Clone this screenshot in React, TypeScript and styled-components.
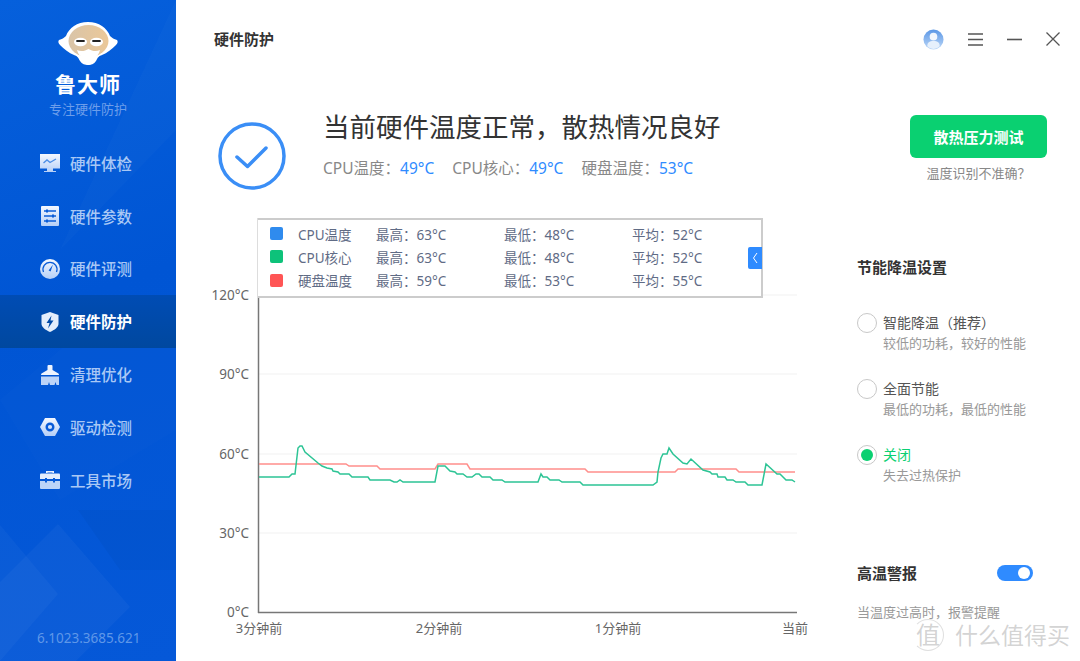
import styled, { createGlobalStyle } from 'styled-components'

const GlobalStyle = createGlobalStyle`
  html, body {
    margin: 0;
    padding: 0;
    background: #fff;
  }
  body {
    font-family: "Noto Sans", "Noto Sans CJK SC", sans-serif;
  }
`

const Window = styled.div`
  position: relative;
  display: flex;
  width: 1080px;
  height: 661px;
  overflow: hidden;
  background: #fff;
`

const Sidebar = styled.aside`
  position: relative;
  display: flex;
  flex-direction: column;
  flex: 0 0 176px;
  height: 661px;
  background: linear-gradient(160deg, #0660dc 0%, #0055d4 45%, #0558d8 100%);
  overflow: hidden;
`

const SidebarPattern = styled.svg`
  position: absolute;
  left: 0;
  top: 0;
`

const Brand = styled.div`
  position: relative;
  display: flex;
  flex-direction: column;
  align-items: center;
  height: 137px;
  padding-top: 21px;
  box-sizing: border-box;
`

const BrandName = styled.div`
  margin-top: 3px;
  font-size: 21px;
  line-height: 30px;
  font-weight: 700;
  letter-spacing: 1px;
  color: #fff;
`

const BrandSlogan = styled.div`
  margin-top: 1px;
  font-size: 13px;
  line-height: 18px;
  color: #6d9eea;
`

const NavList = styled.nav`
  position: relative;
  display: flex;
  flex-direction: column;
`

const NavItem = styled.div<{ $active?: boolean }>`
  display: flex;
  align-items: center;
  gap: 10px;
  height: 52.8px;
  padding-left: 40px;
  font-size: 15.5px;
  font-weight: ${(p) => (p.$active ? 700 : 500)};
  color: ${(p) => (p.$active ? '#fff' : '#a9c8f5')};
  background: ${(p) => (p.$active ? 'linear-gradient(180deg, #004cb4, #00489f)' : 'transparent')};
`

const Version = styled.div`
  position: absolute;
  left: 37px;
  bottom: 13px;
  font-size: 13.5px;
  line-height: 20px;
  color: #5f97e8;
`

const Main = styled.main`
  flex: 1;
  display: flex;
  flex-direction: column;
  min-width: 0;
`

const TopBar = styled.header`
  display: flex;
  align-items: center;
  justify-content: space-between;
  height: 78px;
  padding: 0 20px 0 38px;
  box-sizing: border-box;
`

const PageTitle = styled.h1`
  margin: 0;
  font-size: 15px;
  line-height: 20px;
  font-weight: 700;
  color: #333;
`

const WindowTools = styled.div`
  display: flex;
  align-items: center;
  gap: 24px;
`

const StatusRow = styled.section`
  display: flex;
  align-items: flex-start;
  height: 140px;
  padding: 44px 33px 0 42px;
  box-sizing: border-box;
`

const StatusText = styled.div`
  flex: 1;
  margin-left: 37px;
  margin-top: -14px;
`

const StatusTitle = styled.div`
  font-size: 26.5px;
  line-height: 38px;
  color: #333;
`

const StatusTemps = styled.div`
  display: flex;
  gap: 18px;
  margin-top: 10px;
  font-size: 15.5px;
  line-height: 24px;
  color: #888;
`

const TempValue = styled.span`
  color: #2f8bff;
`

const ActionColumn = styled.div`
  display: flex;
  flex-direction: column;
  align-items: center;
  margin-top: -7px;
`

const PrimaryButton = styled.button`
  width: 137px;
  height: 43px;
  border: 0;
  border-radius: 6px;
  background: #0ad071;
  color: #fff;
  font-family: inherit;
  font-size: 15px;
  font-weight: 700;
`

const HelpLink = styled.div`
  margin-top: 6px;
  font-size: 13px;
  line-height: 18px;
  color: #888;
`

const Body = styled.div`
  display: flex;
  flex: 1;
  min-height: 0;
`

const ChartArea = styled.section`
  position: relative;
  flex: 0 0 681px;
`

const ChartLegend = styled.div`
  position: absolute;
  left: 82px;
  top: 0;
  width: 505px;
  height: 80px;
  padding: 2px 0 0 12px;
  box-sizing: border-box;
  border: 2px solid #ccc;
  border-left: 0;
  background: #fff;
`

const LegendRow = styled.div`
  display: grid;
  grid-template-columns: 28px 78px 128px 128px 100px;
  align-items: center;
  height: 23.3px;
  font-size: 13.5px;
  color: #5f6b85;
`

const Swatch = styled.i<{ $color: string }>`
  display: block;
  width: 13px;
  height: 13px;
  border-radius: 2px;
  background: ${(p) => p.$color};
`

const LegendToggle = styled.div`
  position: absolute;
  right: -1px;
  top: 27px;
  display: flex;
  align-items: center;
  justify-content: center;
  width: 14px;
  height: 22px;
  border-radius: 2px 0 0 2px;
  background: #2f8bff;
`

const SettingsPanel = styled.aside`
  flex: 1;
  display: flex;
  flex-direction: column;
  padding-top: 39px;
`

const SectionTitle = styled.div`
  font-size: 15px;
  line-height: 20px;
  font-weight: 700;
  color: #333;
`

const OptionList = styled.div`
  display: flex;
  flex-direction: column;
  gap: 24px;
  margin-top: 36px;
`

const OptionRow = styled.div`
  display: flex;
  align-items: flex-start;
  gap: 6px;
  height: 42px;
`

const Radio = styled.span<{ $checked?: boolean }>`
  display: flex;
  align-items: center;
  justify-content: center;
  width: 20px;
  height: 20px;
  box-sizing: border-box;
  border: 1px solid #c8c8c8;
  border-radius: 50%;
  &::after {
    content: '';
    display: ${(p) => (p.$checked ? 'block' : 'none')};
    width: 12px;
    height: 12px;
    border-radius: 50%;
    background: #0ad071;
  }
`

const OptionLabel = styled.div<{ $checked?: boolean }>`
  font-size: 14px;
  line-height: 20px;
  color: ${(p) => (p.$checked ? '#0ad071' : '#555')};
`

const OptionHint = styled.div`
  font-size: 13px;
  line-height: 20px;
  color: #999;
`

const AlarmRow = styled.div`
  display: flex;
  align-items: center;
  justify-content: space-between;
  width: 176px;
  margin-top: 76px;
`

const Toggle = styled.span`
  display: flex;
  align-items: center;
  justify-content: flex-end;
  width: 36px;
  height: 16px;
  padding-right: 3px;
  box-sizing: border-box;
  border-radius: 8px;
  background: #2f8bff;
  &::after {
    content: '';
    width: 12px;
    height: 12px;
    border-radius: 50%;
    background: #fff;
  }
`

const AlarmHint = styled(OptionHint)`
  margin-top: 19px;
`

const Watermark = styled.div`
  position: absolute;
  right: 10px;
  bottom: 10px;
  display: flex;
  align-items: center;
  gap: 11px;
  font-size: 23px;
  line-height: 30px;
  color: rgba(150, 150, 150, 0.42);
`

const WatermarkBadge = styled.span`
  display: flex;
  align-items: center;
  justify-content: center;
  width: 30px;
  height: 30px;
  border: 1px solid rgba(150, 150, 150, 0.3);
  border-left-color: transparent;
  border-radius: 50%;
  font-size: 24px;
`

// 全角标点
const COLON = '\uFF1A'

const navItems = [
  { label: '硬件体检', icon: 'monitor' },
  { label: '硬件参数', icon: 'sliders' },
  { label: '硬件评测', icon: 'gauge' },
  { label: '硬件防护', icon: 'shield', active: true },
  { label: '清理优化', icon: 'brush' },
  { label: '驱动检测', icon: 'nut' },
  { label: '工具市场', icon: 'toolbox' },
]

const legend = [
  { name: 'CPU温度', color: '#2f8bee', max: 63, min: 48, avg: 52 },
  { name: 'CPU核心', color: '#0dc27a', max: 63, min: 48, avg: 52 },
  { name: '硬盘温度', color: '#ff5555', max: 59, min: 53, avg: 55 },
]

const temps = [
  { label: 'CPU温度', value: '49°C' },
  { label: 'CPU核心', value: '49°C' },
  { label: '硬盘温度', value: '53°C' },
]

const options = [
  { label: '智能降温\uFF08推荐\uFF09', hint: '较低的功耗\uFF0C较好的性能' },
  { label: '全面节能', hint: '最低的功耗\uFF0C最低的性能' },
  { label: '关闭', hint: '失去过热保护', checked: true },
]

// 折线坐标,相对截图取点
const greenLine =
  '259,477 289,477 292,474 295,474 298,448 300,446 302,446 305,452 318,463 322,466 327,468 332,469 333,471 338,472 340,474 349,474 352,477 368,477 370,480 390,480 394,482 397,482 400,480 403,482 435,482 438,466 445,466 450,471 455,472 457,474 463,474 467,477 472,477 476,474 479,474 482,477 490,477 493,480 502,480 505,482 538,482 541,474 543,477 547,477 550,480 559,480 562,482 580,482 583,485 653,485 657,482 658,472 661,458 663,454 667,454 669,448 673,454 683,463 687,464 691,459 703,470 710,472 712,474 717,474 718,477 725,477 727,480 733,480 736,482 745,482 748,485 762,485 766,464 777,474 780,474 786,480 792,480 795,482'
const redLine =
  '259,464 346,464 349,466 377,466 380,469 435,469 438,464 467,464 470,469 585,469 588,472 675,472 678,469 736,469 739,472 795,472'

const yTicks = [
  { label: '120°C', y: 295 },
  { label: '90°C', y: 374 },
  { label: '60°C', y: 454 },
  { label: '30°C', y: 533 },
  { label: '0°C', y: 612 },
]

const xTicks = [
  { label: '3分钟前', x: 259 },
  { label: '2分钟前', x: 439 },
  { label: '1分钟前', x: 618 },
  { label: '当前', x: 795 },
]

function NavIcon({ name }: { name: string }) {
  const fill = 'url(#navIconFill)'
  const bg = name === 'shield' ? '#004aa8' : '#0a5cd8'
  return (
    <svg width="20" height="20" viewBox="0 0 20 20">
      {name === 'monitor' && (
        <>
          <path d="M0 1h20v14.500H0zM7 15.500h6V18h3v1H4v-1h3z" fill={fill} />
          <path d="M3.500 10l3.500-3 3 2.500L16 6" fill="none" stroke="#4d8ee6" strokeWidth="1.400" />
        </>
      )}
      {name === 'sliders' && (
        <>
          <rect x="1" y="0" width="18" height="20" rx="1" fill={fill} />
          <path d="M4 5h12M4 10h12M4 15h12" stroke={bg} strokeWidth="1.300" />
          <path d="M7 3.500v3M13 8.500v3M7 13.500v3" stroke={bg} strokeWidth="2" />
        </>
      )}
      {name === 'gauge' && (
        <>
          <circle cx="10" cy="10" r="10" fill={fill} />
          <path d="M3.500 13a7 7 0 1 1 13 0" fill="none" stroke={bg} strokeWidth="1.300" />
          <path d="M8.600 11.500L13 5.500l-2.400 7z" fill={bg} />
        </>
      )}
      {name === 'shield' && (
        <>
          <path d="M10 0l8.500 3v9c0 3-4 6-8.500 8C5.500 18 1.500 15 1.500 12V3z" fill="#e4eefc" />
          <path d="M11.500 3.500L6.500 11h3l-1.500 5.500 5.500-8h-3z" fill={bg} />
        </>
      )}
      {name === 'brush' && (
        <>
          <path d="M8.500 0h3q1 0 1 1v4l6 3.500q.5.500.5 1.500H1q0-1 .5-1.500l6-3.500V1q0-1 1-1z" fill="#eef4fe" />
          <path d="M1 11.500h18V20h-2.500l-1-3-1 3H10l-1-3-1 3H1z" fill="#bcd4f8" />
        </>
      )}
      {name === 'nut' && (
        <>
          <path d="M5 1h10l5 9-5 9H5L0 10z" fill={fill} />
          <circle cx="10" cy="10" r="3.300" fill="none" stroke={bg} strokeWidth="2.400" />
        </>
      )}
      {name === 'toolbox' && (
        <>
          <path d="M6 3V1h8v2h-1.500V2.500h-5V3z" fill="#eaf2fe" />
          <path d="M1 3.500h18q1 0 1 1V9H0V4.500q0-1 1-1z" fill="#e4eefc" />
          <path d="M0 11h20v7q0 1-1 1H1q-1 0-1-1z" fill="#bcd4f8" />
          <path d="M5 8h2v4.500H5zM13 8h2v4.500h-2z" fill={bg} />
        </>
      )}
    </svg>
  )
}

function Logo() {
  return (
    <svg width="60" height="45" viewBox="0 0 60 45">
      <defs>
        <linearGradient id="logoHead" x1="0" y1="0" x2="1" y2="0">
          <stop offset="0" stopColor="#d9c4a8" />
          <stop offset="1" stopColor="#ebc898" />
        </linearGradient>
      </defs>
      <path
        d="M30 1C41 1 49 7 52 15c2 2 4 3 7 4 1 1 1 3-1 5-4 4-9 8-14 10-3 1-4 2-6 6-2 3-5 4-8 4s-6-1-8-4c-2-4-3-5-6-6-5-2-10-6-14-10-2-2-2-4-1-5 3-1 5-2 7-4C11 7 19 1 30 1z"
        fill="#fff"
      />
      <ellipse cx="30.500" cy="20" rx="20" ry="16" fill="url(#logoHead)" />
      <path
        d="M19 29c4 2 8 1 11.500-1 3.500 2 7.500 3 11.500 1-1 4-3 6-5 7-1 5-4 8-6.500 8s-5.500-3-6.500-8c-2-1-4-3-5-7z"
        fill="#fff"
      />
      <ellipse cx="22.500" cy="21" rx="6.500" ry="4.200" fill="#fff" />
      <ellipse cx="38.500" cy="21" rx="6.500" ry="4.200" fill="#fff" />
      <path d="M19 20h7M35 20h7" stroke="#222" strokeWidth="1.800" strokeLinecap="round" />
    </svg>
  )
}

function TemperatureChart() {
  // svg 坐标原点 = 页面 (176, 218)
  return (
    <svg width="681" height="425" viewBox="176 218 681 425">
      {yTicks.slice(0, -1).map((t) => (
        <line key={t.y} x1="259" x2="797" y1={t.y} y2={t.y} stroke="#f1f1f1" strokeWidth="1" />
      ))}
      <line x1="258.500" x2="258.500" y1="218" y2="613" stroke="#777" strokeWidth="1.500" />
      <line x1="258" x2="797" y1="612.500" y2="612.500" stroke="#777" strokeWidth="1.500" />
      {yTicks.map((t) => (
        <text key={t.label} x="249" y={t.y + 5} textAnchor="end" fontSize="13.500" fill="#666">
          {t.label}
        </text>
      ))}
      {xTicks.map((t) => (
        <text key={t.label} x={t.x} y="633" textAnchor="middle" fontSize="13" fill="#666">
          {t.label}
        </text>
      ))}
      <polyline points={redLine} fill="none" stroke="#ff8f8c" strokeWidth="1.500" />
      <polyline points={greenLine} fill="none" stroke="#2dc495" strokeWidth="1.500" />
    </svg>
  )
}

export default function App() {
  return (
    <>
      <GlobalStyle />
      <Window>
        <Sidebar>
          <SidebarPattern width="176" height="661" viewBox="0 0 176 661">
            <defs>
              <linearGradient id="navIconFill" x1="0" y1="0" x2="0" y2="1">
                <stop offset="0" stopColor="#f4f8ff" />
                <stop offset="1" stopColor="#b5cff7" />
              </linearGradient>
            </defs>
            <path d="M58 524L130 607 76 661H0V582z" fill="#ffffff" fillOpacity="0.035" />
            <path d="M0 525L58 594 0 661z" fill="#ffffff" fillOpacity="0.03" />
            <path d="M78 510h98v60l-56 0z" fill="#000000" fillOpacity="0.03" />
            <path d="M176 0v130L60 250z" fill="#ffffff" fillOpacity="0.02" />
            <path d="M0 400L120 300 176 350V430L60 500z" fill="#ffffff" fillOpacity="0.012" />
          </SidebarPattern>
          <Brand>
            <Logo />
            <BrandName>鲁大师</BrandName>
            <BrandSlogan>专注硬件防护</BrandSlogan>
          </Brand>
          <NavList>
            {navItems.map((item) => (
              <NavItem key={item.label} $active={item.active}>
                <NavIcon name={item.icon} />
                {item.label}
              </NavItem>
            ))}
          </NavList>
          <Version>6.1023.3685.621</Version>
        </Sidebar>
        <Main>
          <TopBar>
            <PageTitle>硬件防护</PageTitle>
            <WindowTools>
              <svg width="21" height="21" viewBox="0 0 22 22">
                <defs>
                  <linearGradient id="avatarBg" x1="0" y1="0" x2="0" y2="1">
                    <stop offset="0" stopColor="#5b97e6" />
                    <stop offset="1" stopColor="#bcd7f7" />
                  </linearGradient>
                </defs>
                <circle cx="11" cy="11" r="10.500" fill="url(#avatarBg)" />
                <circle cx="11" cy="8" r="4" fill="#fff" fillOpacity="0.9" />
                <path d="M4.500 18c0-4 2-5.500 6.500-5.500s6.500 1.500 6.500 5.500q-3 3-6.500 3t-6.500-3z" fill="#e6f0fc" />
              </svg>
              <svg width="15" height="13" viewBox="0 0 15 13">
                <path d="M0 1h15M0 6.500h15M0 12h15" stroke="#555" strokeWidth="1.400" />
              </svg>
              <svg width="15" height="13" viewBox="0 0 15 13">
                <path d="M0 6.500h15" stroke="#555" strokeWidth="1.600" />
              </svg>
              <svg width="14" height="14" viewBox="0 0 14 14">
                <path d="M.5.500l13 13M13.500.500l-13 13" stroke="#555" strokeWidth="1.300" />
              </svg>
            </WindowTools>
          </TopBar>
          <StatusRow>
            <svg width="68" height="68" viewBox="0 0 68 68">
              <circle cx="34" cy="34" r="32" fill="none" stroke="#3a8ef6" strokeWidth="3.500" />
              <path
                d="M19 35l10.500 9.500L48 26"
                fill="none"
                stroke="#3a8ef6"
                strokeWidth="3.500"
                strokeLinecap="round"
                strokeLinejoin="round"
              />
            </svg>
            <StatusText>
              <StatusTitle>{'当前硬件温度正常\uFF0C散热情况良好'}</StatusTitle>
              <StatusTemps>
                {temps.map((t) => (
                  <span key={t.label}>
                    {t.label}
                    {COLON}
                    <TempValue>{t.value}</TempValue>
                  </span>
                ))}
              </StatusTemps>
            </StatusText>
            <ActionColumn>
              <PrimaryButton>散热压力测试</PrimaryButton>
              <HelpLink>{'温度识别不准确\uFF1F'}</HelpLink>
            </ActionColumn>
          </StatusRow>
          <Body>
            <ChartArea>
              <TemperatureChart />
              <ChartLegend>
                {legend.map((row) => (
                  <LegendRow key={row.name}>
                    <Swatch $color={row.color} />
                    <span>{row.name}</span>
                    <span>
                      最高{COLON}
                      {row.max}°C
                    </span>
                    <span>
                      最低{COLON}
                      {row.min}°C
                    </span>
                    <span>
                      平均{COLON}
                      {row.avg}°C
                    </span>
                  </LegendRow>
                ))}
                <LegendToggle>
                  <svg width="6" height="12" viewBox="0 0 6 12">
                    <path d="M5 1L1.500 6 5 11" fill="none" stroke="#fff" strokeWidth="1" />
                  </svg>
                </LegendToggle>
              </ChartLegend>
            </ChartArea>
            <SettingsPanel>
              <SectionTitle>节能降温设置</SectionTitle>
              <OptionList>
                {options.map((o) => (
                  <OptionRow key={o.label}>
                    <Radio $checked={o.checked} />
                    <div>
                      <OptionLabel $checked={o.checked}>{o.label}</OptionLabel>
                      <OptionHint>{o.hint}</OptionHint>
                    </div>
                  </OptionRow>
                ))}
              </OptionList>
              <AlarmRow>
                <SectionTitle>高温警报</SectionTitle>
                <Toggle />
              </AlarmRow>
              <AlarmHint>{'当温度过高时\uFF0C报警提醒'}</AlarmHint>
            </SettingsPanel>
          </Body>
        </Main>
        <Watermark>
          <WatermarkBadge>值</WatermarkBadge>
          什么值得买
        </Watermark>
      </Window>
    </>
  )
}
